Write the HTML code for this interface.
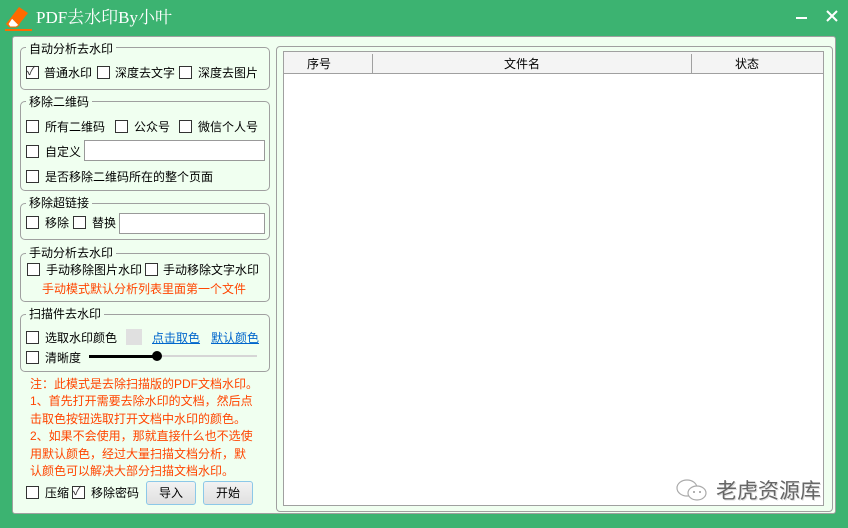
<!DOCTYPE html>
<html><head><meta charset="utf-8"><style>
*{margin:0;padding:0;box-sizing:border-box}
body{width:848px;height:528px;background:#3cb371;position:relative;overflow:hidden;font-family:"Liberation Sans","Noto Sans CJK SC",sans-serif;font-size:12px;color:#000}
.a{position:absolute;white-space:nowrap;line-height:14px}
.panel{position:absolute;left:12px;top:36px;width:824px;height:478px;background:#f0fff0;border:1px solid #a0a0a0;border-radius:3px}
.g{position:absolute;left:20px;width:250px;border:1px solid #a0a0a0;border-radius:5px}
.gt{position:absolute;background:#f0fff0;padding:0 3px;left:26px;line-height:14px}
.cb{position:absolute;width:13px;height:13px;border:1px solid #333;background:#fff}
.in{position:absolute;height:21px;border:1px solid #999;background:#fff}
.red{color:#ff4500}
.lnk{color:#0066cc;text-decoration:underline}
.btn{position:absolute;height:24px;border:1px solid #8cc8e8;border-radius:3px;background:linear-gradient(#f2f2f2,#e0e0e0);text-align:center;line-height:22px}
</style></head><body>
<svg class="a" style="left:0;top:0" width="36" height="36" viewBox="0 0 36 36"><path d="M6 24 L19 7 L28 13 L17 27 L9 27 Z" fill="#ff6a00"/><path d="M8 24 L12 18 L19 25 L16 27 L10 27 Z" fill="#fff"/><path d="M8 24 L12 18 L19 25 L16 27 L10 27 Z" fill="none" stroke="#ff6a00" stroke-width="1"/><rect x="5" y="29" width="27" height="2" fill="#ff6a00"/></svg>
<div class="a" style="left:36px;top:8px;color:#fff;font-size:17px;line-height:20px;font-family:'Liberation Serif','Noto Serif CJK SC',serif">PDF去水印By小叶</div>
<div class="a" style="left:796px;top:17px;width:11px;height:2px;background:#fff"></div>
<svg class="a" style="left:826px;top:10px" width="12" height="12" viewBox="0 0 12 12"><path d="M1 1 L11 11 M11 1 L1 11" stroke="#fff" stroke-width="2"/></svg>
<div class="panel"></div>

<div class="g" style="top:47px;height:43px"></div><div class="a gt" style="top:42px">自动分析去水印</div>
<div class="cb" style="left:26px;top:66px"></div><div class="a" style="left:27px;top:64px;font-size:12px;color:#333">✓</div>
<div class="a" style="left:44px;top:66px">普通水印</div>
<div class="cb" style="left:97px;top:66px"></div><div class="a" style="left:115px;top:66px">深度去文字</div>
<div class="cb" style="left:179px;top:66px"></div><div class="a" style="left:198px;top:66px">深度去图片</div>

<div class="g" style="top:101px;height:90px"></div><div class="a gt" style="top:95px">移除二维码</div>
<div class="cb" style="left:26px;top:120px"></div><div class="a" style="left:45px;top:120px">所有二维码</div>
<div class="cb" style="left:115px;top:120px"></div><div class="a" style="left:134px;top:120px">公众号</div>
<div class="cb" style="left:179px;top:120px"></div><div class="a" style="left:198px;top:120px">微信个人号</div>
<div class="cb" style="left:26px;top:145px"></div><div class="a" style="left:45px;top:145px">自定义</div>
<div class="in" style="left:84px;top:140px;width:181px"></div>
<div class="cb" style="left:26px;top:170px"></div><div class="a" style="left:45px;top:170px">是否移除二维码所在的整个页面</div>

<div class="g" style="top:203px;height:37px"></div><div class="a gt" style="top:196px">移除超链接</div>
<div class="cb" style="left:26px;top:216px"></div><div class="a" style="left:45px;top:216px">移除</div>
<div class="cb" style="left:73px;top:216px"></div><div class="a" style="left:92px;top:216px">替换</div>
<div class="in" style="left:119px;top:213px;width:146px"></div>

<div class="g" style="top:253px;height:49px"></div><div class="a gt" style="top:246px">手动分析去水印</div>
<div class="cb" style="left:27px;top:263px"></div><div class="a" style="left:46px;top:263px">手动移除图片水印</div>
<div class="cb" style="left:145px;top:263px"></div><div class="a" style="left:163px;top:263px">手动移除文字水印</div>
<div class="a red" style="left:42px;top:282px">手动模式默认分析列表里面第一个文件</div>

<div class="g" style="top:314px;height:58px"></div><div class="a gt" style="top:307px">扫描件去水印</div>
<div class="cb" style="left:26px;top:331px"></div><div class="a" style="left:45px;top:331px">选取水印颜色</div>
<div class="a" style="left:126px;top:329px;width:16px;height:16px;background:#e0e0e0"></div>
<div class="a lnk" style="left:152px;top:331px">点击取色</div>
<div class="a lnk" style="left:211px;top:331px">默认颜色</div>
<div class="cb" style="left:26px;top:351px"></div><div class="a" style="left:45px;top:351px">清晰度</div>
<div class="a" style="left:89px;top:355px;width:68px;height:3px;background:#000"></div>
<div class="a" style="left:157px;top:355px;width:100px;height:2px;background:#d6d6d6"></div>
<div class="a" style="left:152px;top:351px;width:10px;height:10px;border-radius:50%;background:#000"></div>

<div class="a red" style="left:30px;top:376px;line-height:17.4px">注：此模式是去除扫描版的PDF文档水印。<br>1、首先打开需要去除水印的文档，然后点<br>击取色按钮选取打开文档中水印的颜色。<br>2、如果不会使用，那就直接什么也不选使<br>用默认颜色，经过大量扫描文档分析，默<br>认颜色可以解决大部分扫描文档水印。</div>

<div class="cb" style="left:26px;top:486px"></div><div class="a" style="left:45px;top:486px">压缩</div>
<div class="cb" style="left:72px;top:486px"></div><div class="a" style="left:73px;top:484px;color:#333">✓</div>
<div class="a" style="left:91px;top:486px">移除密码</div>
<div class="btn" style="left:146px;top:481px;width:50px">导入</div>
<div class="btn" style="left:203px;top:481px;width:50px">开始</div>

<div class="a" style="left:276px;top:46px;width:557px;height:466px;border:1px solid #a0a0a0;border-radius:4px;background:#f0fff0"></div>
<div class="a" style="left:283px;top:51px;width:541px;height:455px;border:1px solid #a0a0a0;background:#fff"></div>
<div class="a" style="left:284px;top:52px;width:539px;height:22px;background:#f4f4f4;border-bottom:1px solid #a0a0a0"></div>
<div class="a" style="left:372px;top:54px;width:1px;height:19px;background:#a0a0a0"></div>
<div class="a" style="left:691px;top:54px;width:1px;height:19px;background:#a0a0a0"></div>
<div class="a" style="left:307px;top:57px">序号</div>
<div class="a" style="left:504px;top:57px">文件名</div>
<div class="a" style="left:735px;top:57px">状态</div>

<svg class="a" style="left:675px;top:477px" width="36" height="26" viewBox="0 0 36 26"><ellipse cx="12" cy="11" rx="10" ry="8" fill="none" stroke="#aaa" stroke-width="1.2"/><ellipse cx="22" cy="16" rx="9" ry="7" fill="#fff" stroke="#aaa" stroke-width="1.2"/><circle cx="19" cy="15" r="1" fill="#999"/><circle cx="25" cy="15" r="1" fill="#999"/></svg>
<div class="a" style="left:716px;top:480px;font-size:21px;line-height:24px;color:#666;text-shadow:1px 1px 0 #ddd">老虎资源库</div>
</body></html>
